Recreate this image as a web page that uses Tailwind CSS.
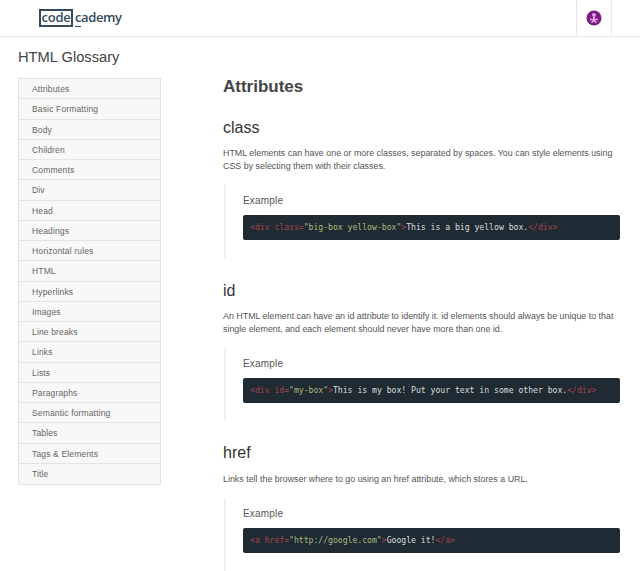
<!DOCTYPE html>
<html><head><meta charset="utf-8"><script src="https://cdn.jsdelivr.net/npm/@tailwindcss/browser@4"></script></head>
<body class="bg-white overflow-hidden font-['Liberation_Sans',sans-serif]">
<div class="w-[640px] h-[571px] overflow-hidden">
<header class="h-[37px] border-b border-[#ececec] flex justify-between">
  <div class="pl-[39px] pt-[8px]">
    <div class="flex items-center h-[19px] text-[13px] leading-none font-semibold text-[#34495e] font-['Open_Sans',sans-serif]">
      <span class="border-2 border-[#34495e] h-[18px] w-[34px] flex items-center justify-center tracking-[-0.2px]">code</span><span class="relative ml-[2px] tracking-[-0.4px]">cademy<span class="absolute left-0 bottom-[-3px] w-[6px] h-[1.500px] bg-[#34495e]"></span></span>
    </div>
  </div>
  <div class="w-[36px] mr-[28px] border-x border-[#e8e8e8] flex items-center justify-center">
    <svg width="16" height="16" viewBox="0 0 16 16"><circle cx="8" cy="8" r="7.5" fill="#7b1b82"/><circle cx="8" cy="5" r="2" fill="#e29ae4"/><path d="M7 7h2v2l3-.5v2L9.5 10l1.500 3H9.500L8 11.500 6.500 13H5l1.500-3L4 10.500v-2L7 9z" fill="#e29ae4"/></svg>
  </div>
</header>
<div class="flex">
  <aside class="w-[223px] shrink-0 pl-[18px]">
    <h2 class="text-[14.700px] leading-[20px] mt-[10px] text-[#444]">HTML Glossary</h2>
    <ul class="mt-[11px] w-[143px] border border-[#e2e2e2] bg-[#f8f8f8] text-[8.500px] text-[#666] tracking-[0.15px] [&>li]:h-[20.250px] [&>li]:leading-[20px] [&>li]:pl-[13px] [&>li]:border-b [&>li]:border-[#e4e4e4] [&>li:last-child]:border-b-0">
      <li>Attributes</li><li>Basic Formatting</li><li>Body</li><li>Children</li><li>Comments</li><li>Div</li><li>Head</li><li>Headings</li><li>Horizontal rules</li><li>HTML</li><li>Hyperlinks</li><li>Images</li><li>Line breaks</li><li>Links</li><li>Lists</li><li>Paragraphs</li><li>Semantic formatting</li><li>Tables</li><li>Tags &amp; Elements</li><li>Title</li>
    </ul>
  </aside>
  <main class="w-[397px] shrink-0 text-[#444]">
    <h1 class="text-[17px] leading-[22px] font-bold mt-[39px] text-[#444]">Attributes</h1>

    <h2 class="text-[16px] leading-[20px] mt-[20px] text-[#333]">class</h2>
    <p class="text-[8.900px] leading-[13px] mt-[9px] text-[#555]">HTML elements can have one or more classes, separated by spaces. You can style elements using<br>CSS by selecting them with their classes.</p>
    <section class="mt-[12px] ml-[1px] border-l-2 border-[#f0f0f0] pl-[17px] h-[73px] pt-[10px]">
      <div class="text-[10px] leading-[12px] text-[#555] tracking-[0.2px]">Example</div>
      <pre class="mt-[8px] h-[25px] rounded-[2px] bg-[#1f2a33] pl-[7px] font-['DejaVu_Sans_Mono',monospace] text-[8.200px] tracking-[-0.05px] leading-[25px] text-[#d8dcdc] overflow-hidden"><span class="text-[#a8444e]">&lt;div class=</span><span class="text-[#a9b77e]">"big-box yellow-box"</span><span class="text-[#a8444e]">&gt;</span>This is a big yellow box.<span class="text-[#a8444e]">&lt;/div&gt;</span></pre>
    </section>

    <h2 class="text-[16px] leading-[20px] mt-[23px] text-[#333]">id</h2>
    <p class="text-[8.900px] leading-[13px] mt-[9px] text-[#555]">An HTML element can have an id attribute to identify it. id elements should always be unique to that<br>single element, and each element should never have more than one id.</p>
    <section class="mt-[12px] ml-[1px] border-l-2 border-[#f0f0f0] pl-[17px] h-[73px] pt-[10px]">
      <div class="text-[10px] leading-[12px] text-[#555] tracking-[0.2px]">Example</div>
      <pre class="mt-[8px] h-[25px] rounded-[2px] bg-[#1f2a33] pl-[7px] font-['DejaVu_Sans_Mono',monospace] text-[8.200px] tracking-[-0.05px] leading-[25px] text-[#d8dcdc] overflow-hidden"><span class="text-[#a8444e]">&lt;div id=</span><span class="text-[#a9b77e]">"my-box"</span><span class="text-[#a8444e]">&gt;</span>This is my box! Put your text in some other box.<span class="text-[#a8444e]">&lt;/div&gt;</span></pre>
    </section>

    <h2 class="text-[16px] leading-[20px] mt-[22px] text-[#333]">href</h2>
    <p class="text-[8.900px] leading-[13px] mt-[10px] text-[#555]">Links tell the browser where to go using an href attribute, which stores a URL.</p>
    <section class="mt-[12px] ml-[1px] border-l-2 border-[#f0f0f0] pl-[17px] h-[73px] pt-[10px]">
      <div class="text-[10px] leading-[12px] text-[#555] tracking-[0.2px]">Example</div>
      <pre class="mt-[8px] h-[25px] rounded-[2px] bg-[#1f2a33] pl-[7px] font-['DejaVu_Sans_Mono',monospace] text-[8.200px] tracking-[-0.05px] leading-[25px] text-[#d8dcdc] overflow-hidden"><span class="text-[#a8444e]">&lt;a href=</span><span class="text-[#a9b77e]">"http://google.com"</span><span class="text-[#a8444e]">&gt;</span>Google it!<span class="text-[#a8444e]">&lt;/a&gt;</span></pre>
    </section>
  </main>
</div>
</div>
</body></html>
